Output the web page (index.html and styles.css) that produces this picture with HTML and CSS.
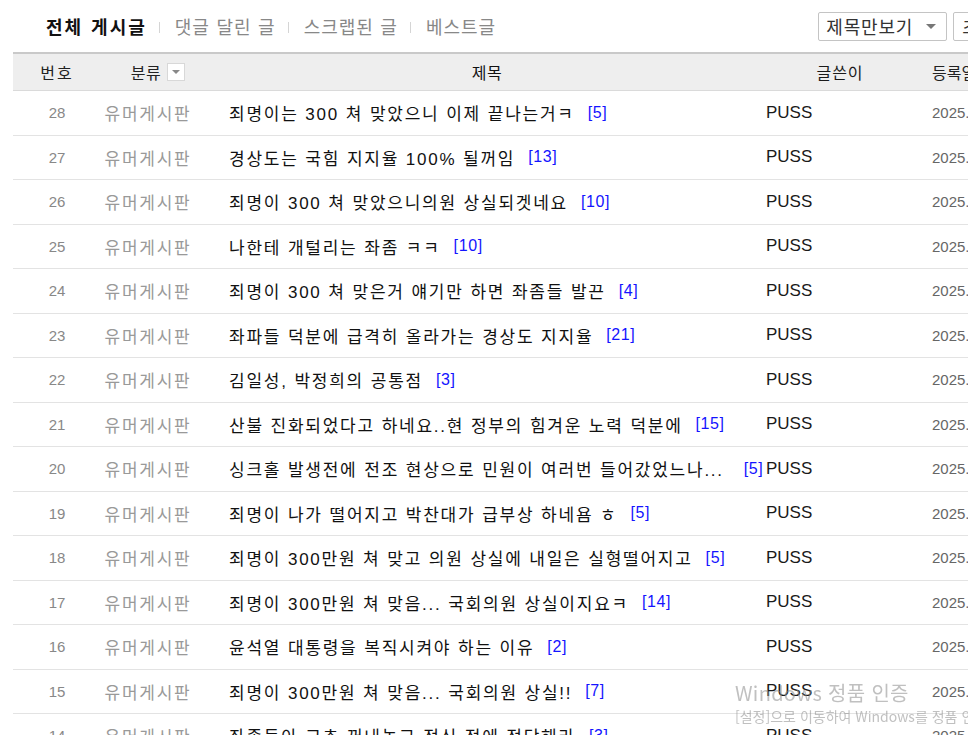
FILE: index.html
```html
<!DOCTYPE html>
<html lang="ko">
<head>
<meta charset="utf-8">
<title>전체 게시글</title>
<link rel="stylesheet" href="styles.css">
</head>
<body>
<div class="page">
  <div class="topbar">
    <ul class="tabs">
      <li class="tab active">전체 게시글</li>
      <li class="sep"></li>
      <li class="tab">댓글 달린 글</li>
      <li class="sep"></li>
      <li class="tab">스크랩된 글</li>
      <li class="sep"></li>
      <li class="tab">베스트글</li>
    </ul>
    <div class="tools">
      <div class="select"><span>제목만보기</span><i class="caret"></i></div>
      <div class="btn">초기화</div>
    </div>
  </div>

  <div class="table">
    <div class="row head">
      <div class="c num">번호</div>
      <div class="c cat">분류 <span class="ddbox"><i class="caret small"></i></span></div>
      <div class="c title">제목</div>
      <div class="c writer">글쓴이</div>
      <div class="c date">등록일</div>
    </div>

    <div class="row"><div class="c num">28</div><div class="c cat">유머게시판</div><div class="c title"><span class="t">죄명이는 300 쳐 맞았으니 이제 끝나는거ㅋ</span><span class="cnt">[5]</span></div><div class="c writer">PUSS</div><div class="c date">2025.04.09</div></div>
    <div class="row"><div class="c num">27</div><div class="c cat">유머게시판</div><div class="c title"><span class="t">경상도는 국힘 지지율 100% 될꺼임</span><span class="cnt">[13]</span></div><div class="c writer">PUSS</div><div class="c date">2025.04.09</div></div>
    <div class="row"><div class="c num">26</div><div class="c cat">유머게시판</div><div class="c title"><span class="t">죄명이 300 쳐 맞았으니의원 상실되겟네요</span><span class="cnt">[10]</span></div><div class="c writer">PUSS</div><div class="c date">2025.04.08</div></div>
    <div class="row"><div class="c num">25</div><div class="c cat">유머게시판</div><div class="c title"><span class="t">나한테 개털리는 좌좀 ㅋㅋ</span><span class="cnt">[10]</span></div><div class="c writer">PUSS</div><div class="c date">2025.04.08</div></div>
    <div class="row"><div class="c num">24</div><div class="c cat">유머게시판</div><div class="c title"><span class="t">죄명이 300 쳐 맞은거 얘기만 하면 좌좀들 발끈</span><span class="cnt">[4]</span></div><div class="c writer">PUSS</div><div class="c date">2025.04.08</div></div>
    <div class="row"><div class="c num">23</div><div class="c cat">유머게시판</div><div class="c title"><span class="t">좌파들 덕분에 급격히 올라가는 경상도 지지율</span><span class="cnt">[21]</span></div><div class="c writer">PUSS</div><div class="c date">2025.04.07</div></div>
    <div class="row"><div class="c num">22</div><div class="c cat">유머게시판</div><div class="c title"><span class="t">김일성, 박정희의 공통점</span><span class="cnt">[3]</span></div><div class="c writer">PUSS</div><div class="c date">2025.04.07</div></div>
    <div class="row"><div class="c num">21</div><div class="c cat">유머게시판</div><div class="c title"><span class="t">산불 진화되었다고 하네요..현 정부의 힘겨운 노력 덕분에</span><span class="cnt">[15]</span></div><div class="c writer">PUSS</div><div class="c date">2025.04.06</div></div>
    <div class="row"><div class="c num">20</div><div class="c cat">유머게시판</div><div class="c title"><span class="t">싱크홀 발생전에 전조 현상으로 민원이 여러번 들어갔었느나...</span><span class="cnt tight">[5]</span></div><div class="c writer">PUSS</div><div class="c date">2025.04.06</div></div>
    <div class="row"><div class="c num">19</div><div class="c cat">유머게시판</div><div class="c title"><span class="t">죄명이 나가 떨어지고 박찬대가 급부상 하네욤 ㅎ</span><span class="cnt">[5]</span></div><div class="c writer">PUSS</div><div class="c date">2025.04.05</div></div>
    <div class="row"><div class="c num">18</div><div class="c cat">유머게시판</div><div class="c title"><span class="t">죄명이 300만원 쳐 맞고 의원 상실에 내일은 실형떨어지고</span><span class="cnt">[5]</span></div><div class="c writer">PUSS</div><div class="c date">2025.04.05</div></div>
    <div class="row"><div class="c num">17</div><div class="c cat">유머게시판</div><div class="c title"><span class="t">죄명이 300만원 쳐 맞음... 국회의원 상실이지요ㅋ</span><span class="cnt">[14]</span></div><div class="c writer">PUSS</div><div class="c date">2025.04.04</div></div>
    <div class="row"><div class="c num">16</div><div class="c cat">유머게시판</div><div class="c title"><span class="t">윤석열 대통령을 복직시켜야 하는 이유</span><span class="cnt">[2]</span></div><div class="c writer">PUSS</div><div class="c date">2025.04.04</div></div>
    <div class="row"><div class="c num">15</div><div class="c cat">유머게시판</div><div class="c title"><span class="t">죄명이 300만원 쳐 맞음... 국회의원 상실!!</span><span class="cnt">[7]</span></div><div class="c writer">PUSS</div><div class="c date">2025.04.03</div></div>
    <div class="row"><div class="c num">14</div><div class="c cat">유머게시판</div><div class="c title"><span class="t">좌좀들아 고추 꺼내놓고 정신 적에 정당해라</span><span class="cnt">[3]</span></div><div class="c writer">PUSS</div><div class="c date">2025.04.03</div></div>
  </div>
</div>

<div class="watermark">
  <div class="wm1">Windows 정품 인증</div>
  <div class="wm2">[설정]으로 이동하여 Windows를 정품 인증합니다.</div>
</div>
</body>
</html>
```

FILE: styles.css
```css
html, body {
  margin: 0;
  padding: 0;
  background: #fff;
  overflow: hidden;
}
body {
  width: 968px;
  height: 735px;
  font-family: "Liberation Sans", "Noto Sans CJK KR", sans-serif;
  color: #222;
}
.page {
  padding-left: 13px;
  width: 1120px;
}
.topbar {
  height: 52px;
  display: flex;
  align-items: center;
  justify-content: space-between;
}
.tabs {
  list-style: none;
  margin: 0;
  padding: 0 0 0 33px;
  display: flex;
  align-items: center;
  font-size: 18px;
  letter-spacing: 1px;
  word-spacing: 0.5px;
}
.tab {
  color: #888;
}
.tab.active {
  color: #111;
  font-weight: bold;
  letter-spacing: 2px;
  word-spacing: 1px;
}
.sep {
  width: 1px;
  height: 11px;
  background: #d5d5d5;
  margin: 2px 15px 0 12px;
}
.tools {
  display: flex;
  gap: 6px;
  margin-right: 112px;
}
.select {
  box-sizing: border-box;
  width: 129px;
  height: 29px;
  border: 1px solid #c4c4c4;
  border-radius: 2px;
  background: #fff;
  display: flex;
  align-items: center;
  justify-content: space-between;
  padding: 0 10px 0 7px;
  font-size: 18px;
  letter-spacing: 0.8px;
  color: #333;
}
.caret {
  display: inline-block;
  width: 0;
  height: 0;
  border-left: 5px solid transparent;
  border-right: 5px solid transparent;
  border-top: 5px solid #777;
}
.caret.small {
  border-left-width: 4px;
  border-right-width: 4px;
  border-top-width: 4px;
  border-top-color: #888;
}
.btn {
  box-sizing: border-box;
  height: 29px;
  border: 1px solid #c4c4c4;
  border-radius: 2px;
  padding: 0 8px;
  display: flex;
  align-items: center;
  font-size: 18px;
  color: #333;
}
.table {
  border-top: 2px solid #c9c9c9;
}
.row {
  display: grid;
  grid-template-columns: 88px 94px 571px 148px 160px;
  align-items: center;
  box-sizing: border-box;
  height: 44.5px;
  border-bottom: 1px solid #e3e3e3;
  font-size: 17px;
  letter-spacing: 1.75px;
  word-spacing: 0.3px;
}
.row.head {
  height: 37px;
  background: #eeeeee;
  border-bottom: 1px solid #dadada;
  color: #222;
  font-size: 16px;
  letter-spacing: 0.6px;
  word-spacing: 0;
}
.c {
  white-space: nowrap;
  overflow: hidden;
}
.num {
  text-align: center;
  color: #888;
  font-size: 15px;
  letter-spacing: 0;
}
.head .num {
  color: #222;
  font-size: 16px;
  letter-spacing: 2px;
}
.cat {
  text-align: center;
  color: #999;
}
.head .cat {
  color: #222;
  display: flex;
  align-items: center;
  justify-content: center;
  gap: 6px;
  padding-left: 20px;
}
.ddbox {
  box-sizing: border-box;
  width: 18px;
  height: 18px;
  border: 1px solid #d8d8d8;
  background: #fff;
  display: inline-flex;
  align-items: center;
  justify-content: center;
}
.title {
  display: flex;
  align-items: center;
  padding-left: 34px;
  color: #111;
}
.head .title {
  justify-content: center;
  padding-left: 13px;
}
.title .t {
  overflow: hidden;
  text-overflow: ellipsis;
  white-space: nowrap;
  min-width: 0;
}
.cnt {
  flex-shrink: 0;
  margin-left: 13px;
  color: #1414ff;
  font-size: 16px;
  letter-spacing: 0.6px;
}
.cnt.tight {
  margin-left: 20px;
}
.writer {
  color: #1a1a1a;
  font-size: 17px;
  letter-spacing: 0;
}
.head .writer {
  text-align: center;
  font-size: 16px;
  letter-spacing: 1px;
}
.date {
  padding-left: 18px;
  color: #666;
  font-size: 15px;
  letter-spacing: 0;
}
.head .date {
  color: #222;
  font-size: 16px;
}
.watermark {
  position: fixed;
  left: 735px;
  top: 679px;
  color: rgba(140, 140, 140, 0.55);
  font-family: "Noto Sans CJK KR", "Liberation Sans", sans-serif;
  white-space: nowrap;
  pointer-events: none;
}
.wm1 {
  font-size: 20px;
  line-height: 27px;
  letter-spacing: 0.3px;
}
.wm2 {
  font-size: 14px;
  line-height: 20px;
}
```
